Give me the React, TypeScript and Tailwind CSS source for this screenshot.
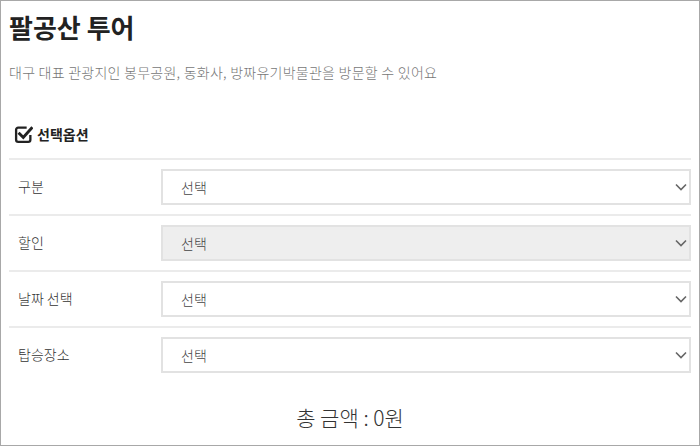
import React from "react";

const Chevron = () => (
  <svg width="12" height="8" viewBox="0 0 12 8" fill="none" className="absolute right-[2px] top-1/2 -translate-y-1/2">
    <path d="M1 1.5 L6 6.5 L11 1.5" stroke="#666" strokeWidth="1.6" />
  </svg>
);

const CheckIcon = () => (
  <svg width="19" height="19" viewBox="0 0 18 18" fill="none">
    <path d="M12 2.5 H4 a2 2 0 0 0 -2 2 V14 a2 2 0 0 0 2 2 H13.5 a2 2 0 0 0 2 -2 V9.5" stroke="#222" strokeWidth="2.2" />
    <path d="M5.3 8.3 L8.8 11.8 L16.5 3.2" stroke="#222" strokeWidth="2.8" strokeLinecap="square" />
  </svg>
);

const rows = [
  { label: "구분", disabled: false },
  { label: "할인", disabled: true },
  { label: "날짜 선택", disabled: false },
  { label: "탑승장소", disabled: false },
];

export default function App() {
  return (
    <div className="w-[700px] h-[446px] border border-[#a8a8a8] bg-white px-[8px] font-['Noto_Sans_CJK_KR',sans-serif] overflow-hidden">
      <h1 className="pt-[9px] text-[26px] font-bold leading-[34px] text-[#222]">팔공산 투어</h1>
      <p className="mt-[18px] text-[14px] font-light tracking-[0.25px] leading-[20px] text-[#777]">
        대구 대표 관광지인 봉무공원, 동화사, 방짜유기박물관을 방문할 수 있어요
      </p>
      <div className="mt-[40px] mb-[12px] flex items-center gap-[4px] pl-[5px] h-[24px]">
        <CheckIcon />
        <span className="text-[14px] font-bold text-[#222]">선택옵션</span>
      </div>
      <div>
        {rows.map((r) => (
          <div key={r.label} className="flex h-[56px] items-center border-t-2 border-[#ebebeb]">
            <div className="w-[152px] pl-[9px] pb-[2px] text-[14px] font-light text-[#333]">{r.label}</div>
            <div
              className={`relative flex h-[36px] flex-1 items-center border-2 border-[#e2e2e2] pl-[18px] text-[14px] font-light text-[#444] ${
                r.disabled ? "bg-[#eeeeee]" : "bg-white"
              }`}
            >
              <span className="pt-[1px]">선택</span>
              <Chevron />
            </div>
          </div>
        ))}
      </div>
      <div className="mt-[23px] text-center text-[21px] font-light leading-[25px] text-[#333]">총 금액 : 0원</div>
    </div>
  );
}
